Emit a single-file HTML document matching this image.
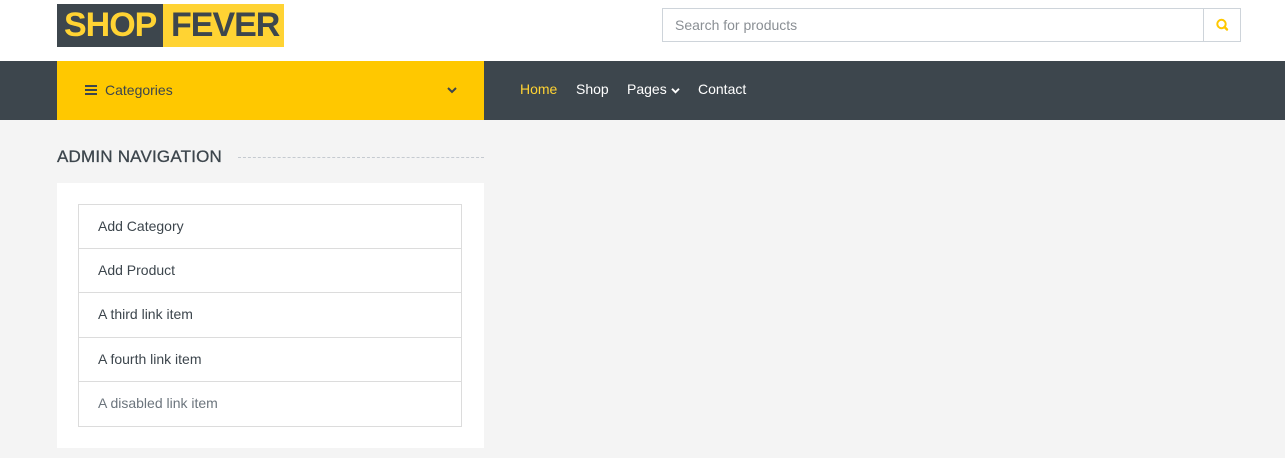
<!DOCTYPE html>
<html><head><style>
*{margin:0;padding:0;box-sizing:border-box}
body{width:1285px;height:458px;background:#f4f4f4;font-family:"Liberation Sans",sans-serif;overflow:hidden;position:relative}
.top{position:absolute;left:0;top:0;width:1285px;height:61px;background:#fff}
.logo1{position:absolute;left:57px;top:4px;width:106px;height:43px;background:#3d464d;color:#ffd333;font-weight:bold;font-size:34px;line-height:43px;padding-left:7px;letter-spacing:-1px}
.logo2{position:absolute;left:163px;top:4px;width:121px;height:43px;background:#ffd333;color:#3d464d;font-weight:bold;font-size:34px;line-height:43px;padding-left:8px;letter-spacing:-1px}
.search{position:absolute;left:662px;top:8px;width:579px;height:34px;border:1px solid #ced4da;background:#fff}
.search span{position:absolute;left:12px;top:8px;font-size:14px;color:#8a8f94}
.search .btn{position:absolute;right:0;top:0;width:37px;height:32px;border-left:1px solid #ced4da}
.nav{position:absolute;left:0;top:61px;width:1285px;height:59px;background:#3d464d}
.cat{position:absolute;left:57px;top:61px;width:427px;height:59px;background:#ffc800;color:#3d464d;font-size:14px}
.navlink{position:absolute;top:81px;font-size:14px;color:#fff;white-space:nowrap}
h2{position:absolute;left:57px;top:147px;font-size:17px;font-weight:normal;color:#3d464d;letter-spacing:.2px;-webkit-text-stroke:.3px #3d464d}
.dash{position:absolute;left:238px;top:157px;width:246px;border-top:1px dashed #c5cad0}
.card{position:absolute;left:57px;top:183px;width:427px;height:265px;background:#fff}
.lg{position:absolute;left:78px;top:204px;width:384px;border:1px solid #dcdcdc}
.lg div{height:44.2px;line-height:43px;padding-left:19px;font-size:14px;color:#3d464d;border-bottom:1px solid #dcdcdc}
.lg div:last-child{border-bottom:none;color:#6c757d}
</style></head><body>
<div class="top"></div>
<div class="logo1">SHOP</div><div class="logo2">FEVER</div>
<div class="search"><span>Search for products</span><div class="btn">
<svg width="37" height="32" viewBox="0 0 37 32"><circle cx="17.5" cy="15" r="4.2" fill="none" stroke="#ffc800" stroke-width="2"/><line x1="20.5" y1="18" x2="23" y2="20.5" stroke="#ffc800" stroke-width="2.4" stroke-linecap="round"/></svg></div></div>
<div class="nav"></div>
<div class="cat">
<svg style="position:absolute;left:28px;top:23px" width="12" height="12" viewBox="0 0 12 12"><rect y="1" width="12" height="2" fill="#3d464d"/><rect y="5" width="12" height="2" fill="#3d464d"/><rect y="9" width="12" height="2" fill="#3d464d"/></svg>
<span style="position:absolute;left:48px;top:21px">Categories</span>
<svg style="position:absolute;left:390px;top:25px" width="10" height="8" viewBox="0 0 10 8"><path d="M1 2l4 4 4-4" fill="none" stroke="#3d464d" stroke-width="2"/></svg>
</div>
<span class="navlink" style="left:520px;color:#ffd333">Home</span>
<span class="navlink" style="left:576px">Shop</span>
<span class="navlink" style="left:627px">Pages <svg width="9" height="7" viewBox="0 0 10 8"><path d="M1 2l4 4 4-4" fill="none" stroke="#fff" stroke-width="2.2"/></svg></span>
<span class="navlink" style="left:698px">Contact</span>
<h2>ADMIN NAVIGATION</h2><div class="dash"></div>
<div class="card"></div>
<div class="lg"><div>Add Category</div><div>Add Product</div><div>A third link item</div><div>A fourth link item</div><div>A disabled link item</div></div>
</body></html>
